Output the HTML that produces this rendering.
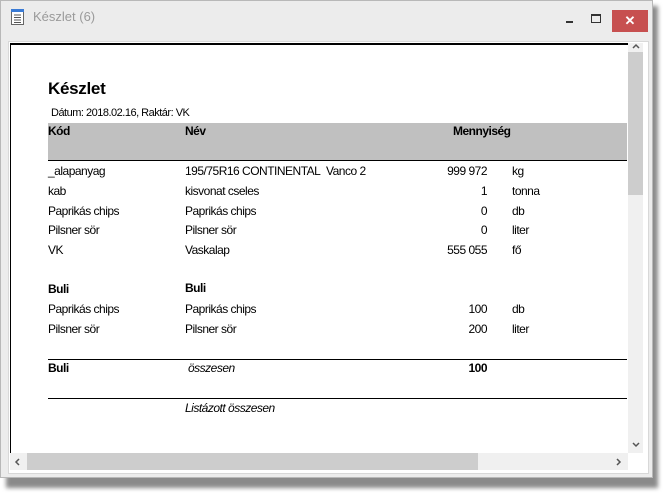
<!DOCTYPE html>
<html><head><style>
body{margin:0;width:666px;height:493px;background:#fff;position:relative;overflow:hidden;font-family:"Liberation Sans",Arial,sans-serif}
.shadow{position:absolute;left:6px;top:6px;width:652px;height:482px;background:#8a8a8a;filter:blur(2px)}
.win{position:absolute;left:0;top:0;width:653px;height:478px;background:#ececec;border:1px solid #b8b8b8;box-sizing:border-box}
.title{position:absolute;left:32px;top:8px;font-size:13px;color:#9a9a9a}
.close{position:absolute;left:611px;top:9px;width:36px;height:22px;background:#c75050;color:#fff;font-size:13px;text-align:center;line-height:22px;font-weight:bold}
.panel{position:absolute;left:8px;top:41px;width:639px;height:431px;border:1px solid #d8d8d8;background:#fff}
.content{position:absolute;left:10px;top:43px;width:618px;height:410px;background:#fff;border-left:1px solid #000;border-top:2px solid #000;box-sizing:border-box}
.vs{position:absolute;left:628px;top:43px;width:15px;height:410px;background:#f0f0f0}
.hs{position:absolute;left:10px;top:453px;width:618px;height:17px;background:#f0f0f0}
.t{position:absolute;font-size:12px;color:#000;white-space:nowrap;line-height:14px;letter-spacing:-0.5px}
.b{font-weight:bold}.r{text-align:right;width:80px}
</style></head><body>
<div class="shadow"></div>
<div class="win">
<svg style="position:absolute;left:10px;top:8px" width="13" height="16"><rect x="0.5" y="0.5" width="12" height="15" fill="#fff" stroke="#666"/><rect x="0" y="0" width="13" height="3" fill="#3a7bd5"/><g stroke="#555"><line x1="3" y1="6" x2="10" y2="6"/><line x1="3" y1="8.5" x2="10" y2="8.5"/><line x1="3" y1="11" x2="10" y2="11"/><line x1="3" y1="13.5" x2="10" y2="13.5"/></g></svg>
<div class="title">Készlet (6)</div>
<div style="position:absolute;left:565px;top:20px;width:7px;height:2px;background:#333"></div>
<div style="position:absolute;left:590px;top:13px;width:8px;height:6px;border:1px solid #333;border-top-width:2px"></div>
<div class="close">✕</div>
</div>
<div class="panel"></div>
<div class="content"></div>
<div class="vs"><div style="position:absolute;left:0;top:9px;width:15px;height:143px;background:#cdcdcd"></div>
<svg style="position:absolute;left:4px;top:0" width="8" height="6"><path d="M1 5L4 2L7 5" stroke="#555" stroke-width="1.5" fill="none"/></svg>
<svg style="position:absolute;left:4px;top:399px" width="8" height="6"><path d="M1 1L4 4L7 1" stroke="#555" stroke-width="1.5" fill="none"/></svg></div>
<div class="hs"><div style="position:absolute;left:17px;top:0;width:451px;height:17px;background:#cdcdcd"></div>
<svg style="position:absolute;left:4px;top:5px" width="6" height="8"><path d="M5 1L2 4L5 7" stroke="#555" stroke-width="1.5" fill="none"/></svg>
<svg style="position:absolute;left:606px;top:5px" width="6" height="8"><path d="M1 1L4 4L1 7" stroke="#555" stroke-width="1.5" fill="none"/></svg></div>

<div class="t b" style="left:48px;top:79px;font-size:17px;line-height:20px;letter-spacing:-0.3px">Készlet</div>
<div class="t" style="left:51px;top:106px;font-size:11px">Dátum: 2018.02.16, Raktár: VK</div>
<div style="position:absolute;left:48px;top:123px;width:579px;height:37px;background:#c0c0c0;border-bottom:1px solid #000"></div>
<div class="t b" style="left:48px;top:124px">Kód</div>
<div class="t b" style="left:185px;top:124px">Név</div>
<div class="t b" style="left:453px;top:124px">Mennyiség</div>

<div class="t" style="left:48px;top:164px">_alapanyag</div><div class="t" style="left:185px;top:164px">195/75R16 CONTINENTAL&nbsp; Vanco 2</div><div class="t r" style="left:407px;top:164px">999 972</div><div class="t" style="left:512px;top:164px">kg</div>
<div class="t" style="left:48px;top:184px">kab</div><div class="t" style="left:185px;top:184px">kisvonat cseles</div><div class="t r" style="left:407px;top:184px">1</div><div class="t" style="left:512px;top:184px">tonna</div>
<div class="t" style="left:48px;top:204px">Paprikás chips</div><div class="t" style="left:185px;top:204px">Paprikás chips</div><div class="t r" style="left:407px;top:204px">0</div><div class="t" style="left:512px;top:204px">db</div>
<div class="t" style="left:48px;top:223px">Pilsner sör</div><div class="t" style="left:185px;top:223px">Pilsner sör</div><div class="t r" style="left:407px;top:223px">0</div><div class="t" style="left:512px;top:223px">liter</div>
<div class="t" style="left:48px;top:243px">VK</div><div class="t" style="left:185px;top:243px">Vaskalap</div><div class="t r" style="left:407px;top:243px">555 055</div><div class="t" style="left:512px;top:243px">fő</div>

<div class="t b" style="left:48px;top:282px">Buli</div><div class="t b" style="left:185px;top:281px">Buli</div>
<div class="t" style="left:48px;top:302px">Paprikás chips</div><div class="t" style="left:185px;top:302px">Paprikás chips</div><div class="t r" style="left:407px;top:302px">100</div><div class="t" style="left:512px;top:302px">db</div>
<div class="t" style="left:48px;top:322px">Pilsner sör</div><div class="t" style="left:185px;top:322px">Pilsner sör</div><div class="t r" style="left:407px;top:322px">200</div><div class="t" style="left:512px;top:322px">liter</div>

<div style="position:absolute;left:48px;top:359px;width:579px;height:1px;background:#000"></div>
<div class="t b" style="left:48px;top:361px">Buli</div><div class="t" style="left:188px;top:361px;font-style:italic">összesen</div><div class="t r b" style="left:407px;top:361px">100</div>
<div style="position:absolute;left:48px;top:398px;width:579px;height:1px;background:#000"></div>
<div class="t" style="left:185px;top:401px;font-style:italic">Listázott összesen</div>
</body></html>
